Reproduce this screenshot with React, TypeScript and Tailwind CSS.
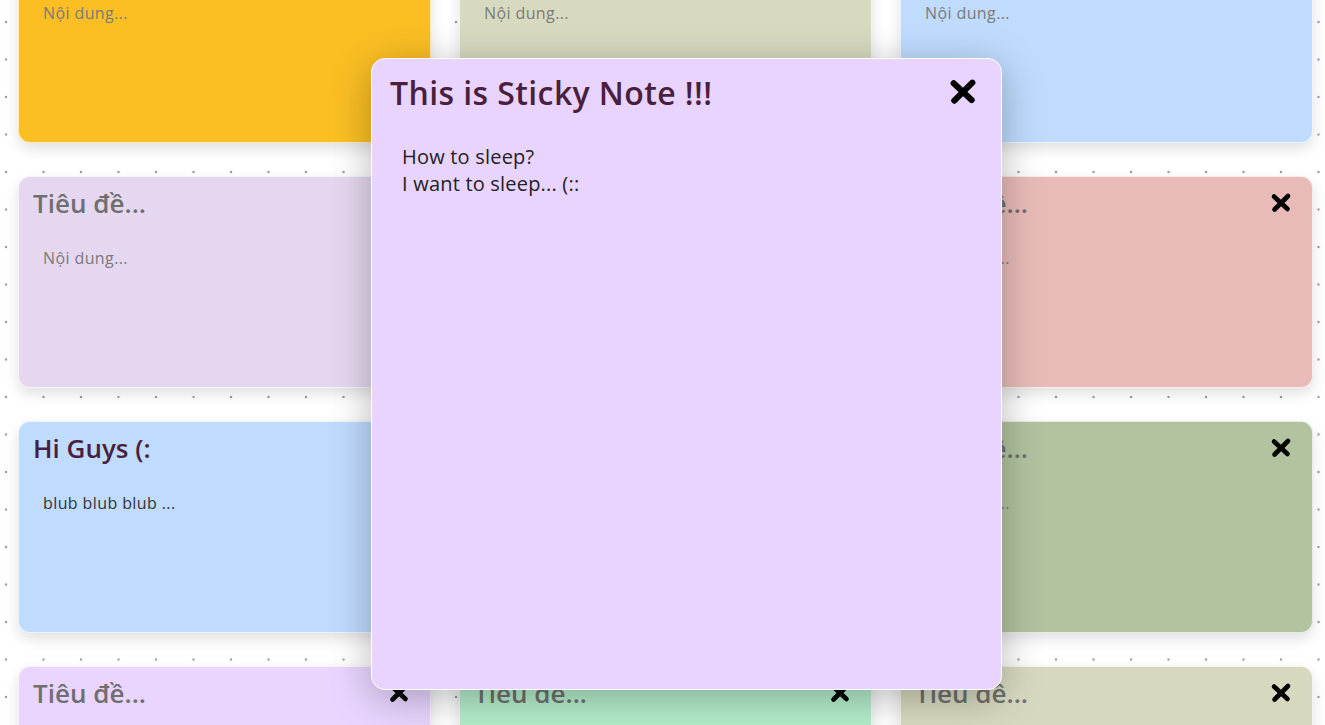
const notes = [
  { title: "", body: "Nội dung...", color: "bg-[#fbbf24]", filled: false },
  { title: "", body: "Nội dung...", color: "bg-[#d7dabf]", filled: false },
  { title: "", body: "Nội dung...", color: "bg-[#bfdbfe]", filled: false },
  { title: "Tiêu đề...", body: "Nội dung...", color: "bg-[#e5d7ef]", filled: false },
  { title: "Tiêu đề...", body: "Nội dung...", color: "bg-[#e2d5c9]", filled: false },
  { title: "Tiêu đề...", body: "Nội dung...", color: "bg-[#e8bbb8]", filled: false },
  { title: "Hi Guys (:", body: "blub blub blub ...", color: "bg-[#bfdbfe]", filled: true },
  { title: "Tiêu đề...", body: "Nội dung...", color: "bg-[#fde68a]", filled: false },
  { title: "Tiêu đề...", body: "Nội dung...", color: "bg-[#b1c39f]", filled: false },
  { title: "Tiêu đề...", body: "Nội dung...", color: "bg-[#e9d5ff]", filled: false },
  { title: "Tiêu đề...", body: "Nội dung...", color: "bg-[#b3edca]", filled: false },
  { title: "Tiêu đề...", body: "Nội dung...", color: "bg-[#d7d9bf]", filled: false },
];

function CloseIcon({ size = 24 }: { size?: number }) {
  return (
    <svg width={size} height={size} viewBox="0 0 24 24" fill="none">
      <path
        d="M5 5.5 L18.5 18 M19 5 L5.5 18.5"
        stroke="#000"
        strokeWidth={4.6}
        strokeLinecap="round"
      />
    </svg>
  );
}

function NoteCard({ note }: { note: (typeof notes)[number] }) {
  return (
    <div
      className={`${note.color} relative h-[212px] rounded-xl border border-white/70 shadow-[0_6px_14px_rgba(0,0,0,0.12)] px-[14px] pt-[8px]`}
    >
      <div className="flex items-start justify-between">
        <h2
          className={`h-[36px] text-[26px] leading-[36px] font-semibold ${
            note.filled ? "text-[#4a1f3d]" : "text-[#6f6f6f]"
          }`}
          style={{ fontFamily: "'Open Sans', sans-serif" }}
        >
          {note.title}
        </h2>
        <div className="mr-[5px] mt-[6px]">
          <CloseIcon size={24} />
        </div>
      </div>
      <p
        className={`mt-[25px] pl-[10px] text-[16px] tracking-[0.4px] ${
          note.filled ? "text-[#333]" : "text-[#7a7a7a]"
        }`}
        style={{ fontFamily: "'Open Sans', sans-serif" }}
      >
        {note.body}
      </p>
    </div>
  );
}

export default function App() {
  return (
    <div className="relative h-[725px] w-[1325px] overflow-hidden bg-white bg-[radial-gradient(circle,#a8949f_1.2px,transparent_1.6px)] bg-[length:37.5px_37.5px] bg-[position:-12.75px_3.25px]">
      <div className="-mt-[69px] grid grid-cols-[413px_413px_413px] gap-x-[28px] gap-y-[33px] pl-[18px]">
        {notes.map((n, i) => (
          <NoteCard key={i} note={n} />
        ))}
      </div>

      {/* Open note */}
      <div
        className="absolute left-[371px] top-[58px] h-[632px] w-[631px] rounded-[14px] border border-white bg-[#e8d4fe] shadow-[0_8px_40px_rgba(0,0,0,0.28)] px-[18px] pt-[12px]"
        style={{ fontFamily: "'Open Sans', sans-serif" }}
      >
        <div className="flex items-center justify-between">
          <h1 className="text-[32px] leading-[44px] font-semibold text-[#4a1f3d] tracking-[0.4px]">
            This is Sticky Note !!!
          </h1>
          <div className="mr-[4px] -mt-[2px]">
            <CloseIcon size={32} />
          </div>
        </div>
        <div className="mt-[28px] pl-[12px] text-[20px] leading-[27px] tracking-[0.2px] text-[#222]">
          <p>How to sleep?</p>
          <p>I want to sleep... (::</p>
        </div>
      </div>
    </div>
  );
}
